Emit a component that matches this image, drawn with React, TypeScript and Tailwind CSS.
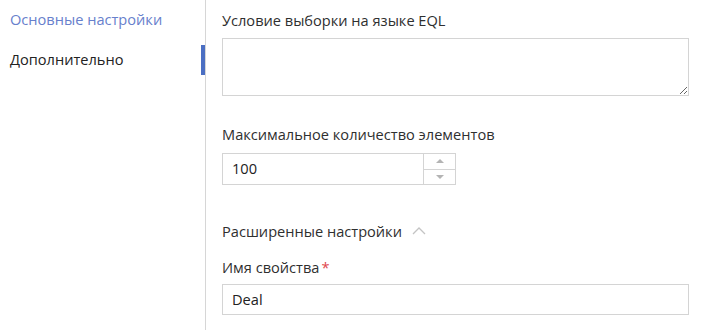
const App = () => {
  return (
    <div className="flex h-[330px] w-[703px] bg-white text-[14.6px] text-[#2f2f2f] font-['Open_Sans',sans-serif]">
      {/* Sidebar */}
      <div className="w-[206px] shrink-0 border-r border-[#d6d6d6]">
        <div className="flex h-[40px] items-center pl-[10px] text-[#6780cc]">Основные настройки</div>
        <div className="relative flex h-[40px] items-center pl-[10px] text-[#222222]">
          Дополнительно
          <span className="absolute right-0 top-[5px] h-[30px] w-[4px] bg-[#4b6fc3]" />
        </div>
      </div>

      {/* Form */}
      <div className="flex-1 pl-[16px] pr-[14px] pt-[10px]">
        <div className="leading-[20px]">Условие выборки на языке EQL</div>
        <textarea className="mt-[8px] block h-[58px] w-full resize-y border border-[#d4d4d4] outline-none" />

        <div className="mt-[28px] leading-[20px]">Максимальное количество элементов</div>
        <div className="mt-[9px] flex h-[32px] w-[234px] border border-[#d4d4d4]">
          <div className="flex flex-1 items-center pl-[9px] text-[#222222]">100</div>
          <div className="flex w-[32px] flex-col border-l border-[#d4d4d4]">
            <div className="flex flex-1 items-center justify-center border-b border-[#d4d4d4]">
              <span className="h-0 w-0 border-x-[4px] border-b-[4px] border-x-transparent border-b-[#b4b4b4]" />
            </div>
            <div className="flex flex-1 items-center justify-center">
              <span className="h-0 w-0 border-x-[4px] border-t-[4px] border-x-transparent border-t-[#b4b4b4]" />
            </div>
          </div>
        </div>

        <div className="mt-[36px] flex items-center gap-[10px] leading-[20px]">
          Расширенные настройки
          <svg width="14" height="8" viewBox="0 0 14 8" fill="none" stroke="#c4c4c4" strokeWidth="1.3">
            <polyline points="1,7 7,1 13,7" />
          </svg>
        </div>

        <div className="mt-[16px] leading-[20px]">
          Имя свойства<span className="ml-[2px] text-[#e0474c]">*</span>
        </div>
        <div className="mt-[7px] flex h-[31px] items-center border border-[#d4d4d4] pl-[9px] text-[#222222]">
          Deal
        </div>
      </div>
    </div>
  );
};

export default App;
